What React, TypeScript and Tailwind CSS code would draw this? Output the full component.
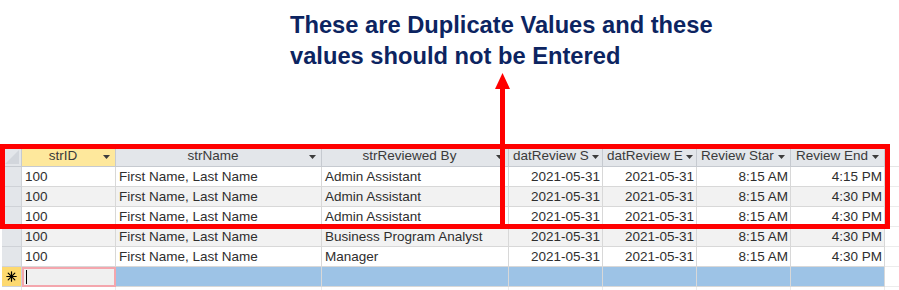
import React from 'react';

type Col = { label: string; w: number; align: 'left' | 'right'; head: 'center' | 'left' };

const cols: Col[] = [
  { label: 'strID', w: 94, align: 'left', head: 'center' },
  { label: 'strName', w: 206, align: 'left', head: 'center' },
  { label: 'strReviewed By', w: 187, align: 'left', head: 'center' },
  { label: 'datReview S', w: 94, align: 'right', head: 'left' },
  { label: 'datReview E', w: 94, align: 'right', head: 'left' },
  { label: 'Review Star', w: 94, align: 'right', head: 'left' },
  { label: 'Review End', w: 94, align: 'right', head: 'center' },
];

const rows = [
  ['100', 'First Name, Last Name', 'Admin Assistant', '2021-05-31', '2021-05-31', '8:15 AM', '4:15 PM'],
  ['100', 'First Name, Last Name', 'Admin Assistant', '2021-05-31', '2021-05-31', '8:15 AM', '4:30 PM'],
  ['100', 'First Name, Last Name', 'Admin Assistant', '2021-05-31', '2021-05-31', '8:15 AM', '4:30 PM'],
  ['100', 'First Name, Last Name', 'Business Program Analyst', '2021-05-31', '2021-05-31', '8:15 AM', '4:30 PM'],
  ['100', 'First Name, Last Name', 'Manager', '2021-05-31', '2021-05-31', '8:15 AM', '4:30 PM'],
];

const Caret = () => (
  <svg width="7" height="4" viewBox="0 0 7 4" className="shrink-0">
    <path d="M0 0 L7 0 L3.5 4 Z" fill="#3c3c3c" />
  </svg>
);

const NewRecordStar = () => (
  <svg width="11" height="11" viewBox="0 0 11 11">
    <g stroke="#000" strokeWidth="1.2" strokeLinecap="round">
      <line x1="5.5" y1="0.8" x2="5.5" y2="10.2" />
      <line x1="0.8" y1="5.5" x2="10.2" y2="5.5" />
      <line x1="2.2" y1="2.2" x2="8.8" y2="8.8" />
      <line x1="8.8" y1="2.2" x2="2.2" y2="8.8" />
    </g>
  </svg>
);

export default function App() {
  return (
    <div
      className="relative w-[899px] h-[290px] bg-white overflow-hidden flex flex-col"
      style={{ fontFamily: '"Liberation Sans", Arial, sans-serif' }}
    >
      {/* Annotation title */}
      <div className="h-[147px] shrink-0 pl-[290px] pt-[10px]">
        <p className="text-[23.7px] leading-[31px] font-bold text-[#0c2461]">
          These are Duplicate Values and these
          <br />
          values should not be Entered
        </p>
      </div>

      {/* Datasheet */}
      <div className="flex flex-col text-[13.5px] text-[#2e2e2e] pl-[2px]">
        {/* header */}
        <div className="flex h-[20px]">
          <div className="relative w-[20px] shrink-0 bg-[#e3e6ea] border-r border-b border-[#c6cad0] overflow-hidden">
            <svg className="absolute inset-0" width="20" height="20" viewBox="0 0 20 20">
              <path d="M17 3 L17 17 L3 17 Z" fill="#d2d6dc" />
            </svg>
          </div>
          {cols.map((c, i) => (
            <div
              key={c.label}
              style={{ width: c.w }}
              className={`shrink-0 flex items-center border-r border-b border-[#c6cad0] pl-[4px] pr-[5px] gap-[3px] ${
                i === 0 ? 'bg-[#fee89c]' : 'bg-[#e3e6ea]'
              }`}
            >
              <span
                className={`flex-1 whitespace-nowrap text-[#3a3a3a] ${
                  c.head === 'center' ? 'text-center' : 'text-left'
                }`}
              >
                {c.label}
              </span>
              <Caret />
            </div>
          ))}
          <div className="flex-1 border-b border-[#e6e6e6]" />
        </div>

        {/* data rows */}
        {rows.map((r, ri) => (
          <div key={ri} className={`flex h-[20px] ${ri % 2 === 1 ? 'bg-[#f2f2f2]' : 'bg-white'}`}>
            <div className="w-[20px] shrink-0 bg-[#e3e6ea] border-r border-b border-[#cfd2d7]" />
            {cols.map((c, ci) => (
              <div
                key={ci}
                style={{ width: c.w }}
                className={`shrink-0 flex items-center border-r border-b border-[#d8d8d8] whitespace-nowrap overflow-hidden leading-none pt-[1px] ${
                  c.align === 'right' ? 'justify-end pr-[2px]' : 'pl-[3px]'
                }`}
              >
                {r[ci]}
              </div>
            ))}
            <div className="flex-1 bg-white border-b border-[#ececec]" />
          </div>
        ))}

        {/* new record row */}
        <div className="flex h-[20px]">
          <div className="w-[20px] shrink-0 bg-[#fdd96f] border-r border-b border-[#cfd2d7] flex items-center justify-center">
            <NewRecordStar />
          </div>
          <div className="w-[94px] shrink-0 bg-[#f0f0f0] border-2 border-[#f4a6ad] flex items-center pl-[2px]">
            <div className="w-px h-[14px] bg-black" />
          </div>
          {cols.slice(1).map((c, ci) => (
            <div
              key={ci}
              style={{ width: c.w }}
              className="shrink-0 bg-[#9dc3e6] border-r border-b border-[#d8d8d8]"
            />
          ))}
          <div className="flex-1 border-b border-[#ececec]" />
        </div>
        <div className="flex h-[20px]">
          <div className="w-[20px] shrink-0 border-r border-[#e6e6e6]" />
          {cols.map((c, ci) => (
            <div key={ci} style={{ width: c.w }} className="shrink-0 border-r border-[#ececec]" />
          ))}
        </div>
      </div>

      {/* Red annotation box and arrow */}
      <svg className="absolute inset-0 pointer-events-none" width="899" height="290" viewBox="0 0 899 290">
        <rect x="2.5" y="146.5" width="885" height="80" fill="none" stroke="#ff0000" strokeWidth="5" />
        <line x1="502.5" y1="146.5" x2="502.5" y2="226.5" stroke="#ff0000" strokeWidth="5" />
        <line x1="502.5" y1="86" x2="502.5" y2="146.5" stroke="#ff0000" strokeWidth="5" />
        <polygon points="502.5,73 495,89 510,89" fill="#ff0000" />
      </svg>
    </div>
  );
}
